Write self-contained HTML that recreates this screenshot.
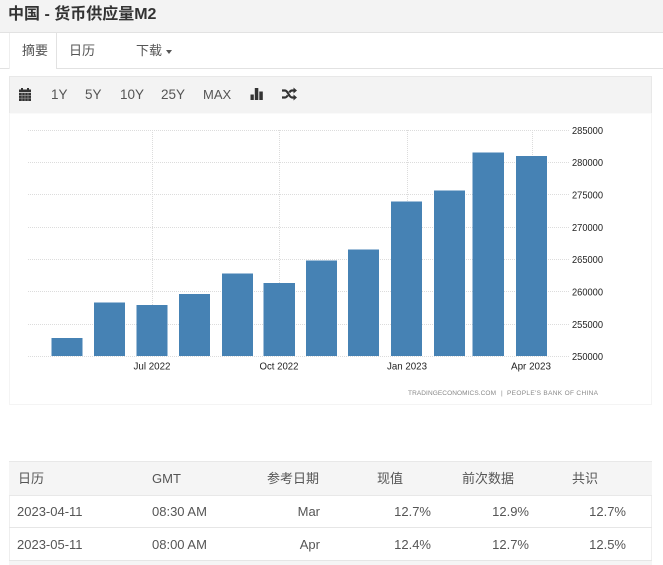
<!DOCTYPE html>
<html><head><meta charset="utf-8">
<style>
html,body{margin:0;padding:0;width:663px;height:565px;overflow:hidden;background:#fff}
body{position:relative;font-family:"Liberation Sans","Noto Sans CJK SC",sans-serif;font-size:13px;color:#555;filter:blur(.3px)}
.a{position:absolute;white-space:nowrap}
.t{line-height:16px}
</style></head><body>
<div class="a" style="left:0;top:0;width:663px;height:32px;background:#f3f3f3;border-bottom:1px solid #e2e2e2"></div>
<div class="a" style="left:8px;top:4px;font-size:16px;line-height:22px;font-weight:bold;color:#333">中国 - 货币供应量M2</div>

<div class="a" style="left:0;top:68px;width:663px;height:1px;background:#e2e2e2"></div>
<div class="a" style="left:9px;top:33px;width:46px;height:36px;background:#fff;border-left:1px solid #eee;border-right:1px solid #e2e2e2"></div>
<div class="a t" style="left:22px;top:43px">摘要</div>
<div class="a t" style="left:69px;top:43px">日历</div>
<div class="a t" style="left:136px;top:43px">下载</div>
<div class="a" style="left:166px;top:50px;width:0;height:0;border-left:3.5px solid transparent;border-right:3.5px solid transparent;border-top:4px solid #555"></div>

<div class="a" style="left:9px;top:76px;width:641px;height:36px;background:#f3f3f3;border:1px solid #e8e8e8"></div>
<svg class="a" style="left:18px;top:87px" width="14" height="15" viewBox="0 0 14 15"><path d="M1 2.500h2V1h2v1.500h4V1h2v1.500h2V5H1z M1 5.800h12V14H1z" fill="#333"/><path d="M1 8.500h12M1 11.200h12M4 6v8M7 6v8M10 6v8" stroke="#999" stroke-width=".7"/></svg>
<div class="a t" style="left:51px;top:87px;font-size:13.500px">1Y</div>
<div class="a t" style="left:85px;top:87px;font-size:13.500px">5Y</div>
<div class="a t" style="left:120px;top:87px;font-size:13.500px">10Y</div>
<div class="a t" style="left:161px;top:87px;font-size:13.500px">25Y</div>
<div class="a t" style="left:203px;top:87px;font-size:13px">MAX</div>
<svg class="a" style="left:250px;top:87px" width="14" height="14" viewBox="0 0 14 14"><path d="M.5 7.500h3.300V13H.5z M4.800 1h3.500v12H4.800z M9.300 4.500h3.500V13H9.300z" fill="#333"/></svg>
<svg class="a" style="left:281px;top:87px" width="16" height="14" viewBox="0 0 16 14"><path d="M1 3.500h3c3 0 4 7 7 7h2M1 10.500h3c1.200 0 2-1 2.800-2.200M8.300 5.500C9 4.400 9.800 3.500 11 3.500h2" fill="none" stroke="#333" stroke-width="2.200"/><path d="M12.500 0.500L16 3.500l-3.500 3z M12.500 7.500L16 10.500l-3.500 3z" fill="#333"/></svg>

<svg class="a" style="left:9px;top:113px" width="643" height="292" viewBox="9 113 643 292">
<rect x="9.500" y="113" width="642" height="291.500" fill="#fff" stroke="#f4f4f4"/>
<g stroke="#dcdcdc" stroke-width="1" stroke-dasharray="1 1" fill="none">
<path d="M28 130.500H570M28 162.500H570M28 194.500H570M28 227.500H570M28 259.500H570M28 291.500H570M28 324.500H570M28 356.500H570"/>
<path d="M152.500 130V356M279.500 130V356M407.500 130V356M532.500 130V356"/>
</g>
<g fill="#4682b4">
<rect x="51.500" y="338" width="31" height="18"/>
<rect x="94" y="302.500" width="31" height="53.500"/>
<rect x="136.500" y="305" width="31" height="51"/>
<rect x="179" y="294" width="31" height="62"/>
<rect x="222" y="273.500" width="31" height="82.500"/>
<rect x="263.500" y="283" width="31.500" height="73"/>
<rect x="306" y="260.500" width="31" height="95.500"/>
<rect x="348" y="249.500" width="31" height="106.500"/>
<rect x="391" y="201.500" width="31" height="154.500"/>
<rect x="434" y="190.500" width="31" height="165.500"/>
<rect x="472.500" y="152.500" width="31.500" height="203.500"/>
<rect x="516" y="156" width="31" height="200"/>
</g>
<g font-family="'Liberation Sans',sans-serif" font-size="10.500" fill="#222">
<g>
<text x="572" y="134" textLength="31" lengthAdjust="spacingAndGlyphs">285000</text>
<text x="572" y="166" textLength="31" lengthAdjust="spacingAndGlyphs">280000</text>
<text x="572" y="198.500" textLength="31" lengthAdjust="spacingAndGlyphs">275000</text>
<text x="572" y="231" textLength="31" lengthAdjust="spacingAndGlyphs">270000</text>
<text x="572" y="263" textLength="31" lengthAdjust="spacingAndGlyphs">265000</text>
<text x="572" y="295.500" textLength="31" lengthAdjust="spacingAndGlyphs">260000</text>
<text x="572" y="328" textLength="31" lengthAdjust="spacingAndGlyphs">255000</text>
<text x="572" y="360" textLength="31" lengthAdjust="spacingAndGlyphs">250000</text>
</g>
<text x="133.500" y="369.500" textLength="37" lengthAdjust="spacingAndGlyphs">Jul 2022</text>
<text x="259.500" y="369.500" textLength="39" lengthAdjust="spacingAndGlyphs">Oct 2022</text>
<text x="387" y="369.500" textLength="40" lengthAdjust="spacingAndGlyphs">Jan 2023</text>
<text x="511" y="369.500" textLength="40" lengthAdjust="spacingAndGlyphs">Apr 2023</text>
<g font-size="6.500" fill="#888">
<text x="408" y="395" textLength="88">TRADINGECONOMICS.COM</text>
<text x="501" y="395">|</text>
<text x="507" y="395" textLength="91">PEOPLE'S BANK OF CHINA</text>
</g>
</g>
</svg>

<div class="a" style="left:9px;top:461px;width:641px;height:104px;border-left:1px solid #eee;border-right:1px solid #eee"></div>
<div class="a" style="left:9px;top:461px;width:643px;background:#f5f5f5;border-top:1px solid #e8e8e8;border-bottom:1px solid #e8e8e8;box-sizing:border-box;height:35px"></div>
<div class="a" style="left:9px;top:527px;width:643px;height:1px;background:#e6e6e6"></div>
<div class="a" style="left:9px;top:560px;width:643px;height:5px;background:#f5f5f5;border-top:1px solid #e6e6e6;box-sizing:border-box"></div>

<div class="a t" style="left:18px;top:471px">日历</div>
<div class="a t" style="left:152px;top:471px">GMT</div>
<div class="a t" style="left:267px;top:471px">参考日期</div>
<div class="a t" style="left:377px;top:471px">现值</div>
<div class="a t" style="left:462px;top:471px">前次数据</div>
<div class="a t" style="left:572px;top:471px">共识</div>

<div class="a t" style="left:17px;top:504px">2023-04-11</div>
<div class="a t" style="left:152px;top:504px">08:30 AM</div>
<div class="a t" style="right:343px;top:504px">Mar</div>
<div class="a t" style="right:232px;top:504px">12.7%</div>
<div class="a t" style="right:134px;top:504px">12.9%</div>
<div class="a t" style="right:37px;top:504px">12.7%</div>

<div class="a t" style="left:17px;top:537px">2023-05-11</div>
<div class="a t" style="left:152px;top:537px">08:00 AM</div>
<div class="a t" style="right:343px;top:537px">Apr</div>
<div class="a t" style="right:232px;top:537px">12.4%</div>
<div class="a t" style="right:134px;top:537px">12.7%</div>
<div class="a t" style="right:37px;top:537px">12.5%</div>
</body></html>
